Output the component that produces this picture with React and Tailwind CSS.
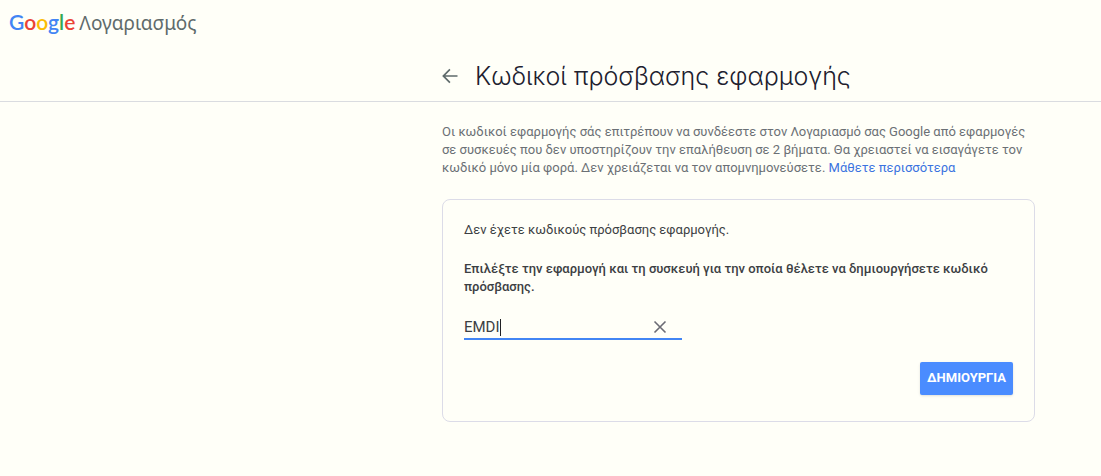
import React, { useEffect, useRef, useState } from "react";

const LOGO_LETTERS = [
    { char: "G", color: "text-[#4285f4]" },
    { char: "o", color: "text-[#ea4335]" },
    { char: "o", color: "text-[#fbbc05]" },
    { char: "g", color: "text-[#4285f4]" },
    { char: "l", color: "text-[#34a853]" },
    { char: "e", color: "text-[#ea4335]" },
];

function GoogleLogo() {
    return (
        <span className="font-['Lato',sans-serif] text-[21px] leading-8 font-semibold">
            {LOGO_LETTERS.map((letter, index) => (
                <span key={index} className={letter.color}>{letter.char}</span>
            ))}
        </span>
    );
}

function BackIcon() {
    return (
        <svg viewBox="0 0 24 24" className="w-5 h-5" fill="currentColor" aria-hidden="true">
            <path d="M21 11H6.4l6.2-6.2L11.2 3.4 2.6 12l8.6 8.6 1.4-1.4L6.4 13H21v-2z" />
        </svg>
    );
}

function ClearIcon() {
    return (
        <svg viewBox="0 0 14 14" className="w-3.5 h-3.5" fill="none" stroke="currentColor" strokeWidth="1.6" aria-hidden="true">
            <path d="M1.5 1.5l11 11M12.5 1.5l-11 11" />
        </svg>
    );
}

export default function App() {
    const [appName, setAppName] = useState("EMDI");
    const [focused, setFocused] = useState(true);
    const inputRef = useRef(null);

    useEffect(() => {
        const input = inputRef.current;
        input?.focus();
        input?.setSelectionRange(input.value.length, input.value.length);
    }, []);

    const handleClear = () => {
        setAppName("");
        inputRef.current?.focus();
    };

    return (
        <div className="min-h-screen bg-[#fffff8] font-['Roboto',sans-serif] text-[#3c4043]">
            <header className="border-b border-[#dadce0]">
                <div className="flex items-baseline gap-1 h-12 px-[9px] pt-1.5">
                    <GoogleLogo />
                    <span className="font-['Noto_Sans',sans-serif] text-[19px] leading-8 text-[#5f6b6b]">Λογαριασμός</span>
                </div>
                <div className="flex items-center gap-[15px] h-[53px] pt-[3px] pl-[440px]">
                    <button type="button" aria-label="Πίσω" className="text-[#5f6b6b] cursor-pointer">
                        <BackIcon />
                    </button>
                    <h1 className="font-['Inter',sans-serif] text-[25px] leading-8 font-light text-[#20202e]">
                        Κωδικοί πρόσβασης εφαρμογής
                    </h1>
                </div>
            </header>

            <main className="ml-[442px] mr-[66px] pt-[21px] pb-8">
                <p className="text-[13px] leading-[18px] text-[#6b7075]">
                    Οι κωδικοί εφαρμογής σάς επιτρέπουν να συνδέεστε στον Λογαριασμό σας Google από εφαρμογές
                    σε συσκευές που δεν υποστηρίζουν την επαλήθευση σε 2 βήματα. Θα χρειαστεί να εισαγάγετε τον
                    κωδικό μόνο μία φορά. Δεν χρειάζεται να τον απομνημονεύσετε.{" "}
                    <a href="#more" className="text-[#3b73e0]">Μάθετε περισσότερα</a>
                </p>

                <form
                    onSubmit={(e) => e.preventDefault()}
                    className="mt-[22px] px-[21px] pt-[21px] pb-[26px] border border-[#dcdce8] rounded-lg text-[13px] leading-[18px]"
                >
                    <p>Δεν έχετε κωδικούς πρόσβασης εφαρμογής.</p>
                    <label htmlFor="app-name" className="block mt-[21px] font-medium">
                        Επιλέξτε την εφαρμογή και τη συσκευή για την οποία θέλετε να δημιουργήσετε κωδικό
                        πρόσβασης.
                    </label>

                    <div className="flex items-center w-[218px] h-7 mt-4 pt-1 pr-[15px] border-b-2 border-[#4285f4]">
                        <input
                            id="app-name"
                            ref={inputRef}
                            type="text"
                            value={appName}
                            onChange={(e) => setAppName(e.target.value)}
                            onFocus={() => setFocused(true)}
                            onBlur={() => setFocused(false)}
                            className="field-sizing-content max-w-44 bg-transparent text-[15px] leading-5 caret-transparent outline-none"
                        />
                        {focused && <span className="w-px h-[17px] bg-[#202124]" />}
                        <button type="button" onClick={handleClear} aria-label="Διαγραφή" className="ml-auto text-[#6b6b74] cursor-pointer">
                            <ClearIcon />
                        </button>
                    </div>

                    <div className="flex justify-end mt-[22px]">
                        <button
                            type="submit"
                            className="h-[33px] px-[7px] pb-0.5 bg-[#4a8cff] text-white text-[13px] font-bold rounded-xs shadow-sm cursor-pointer"
                        >
                            ΔΗΜΙΟΥΡΓΙΑ
                        </button>
                    </div>
                </form>
            </main>
        </div>
    );
}
